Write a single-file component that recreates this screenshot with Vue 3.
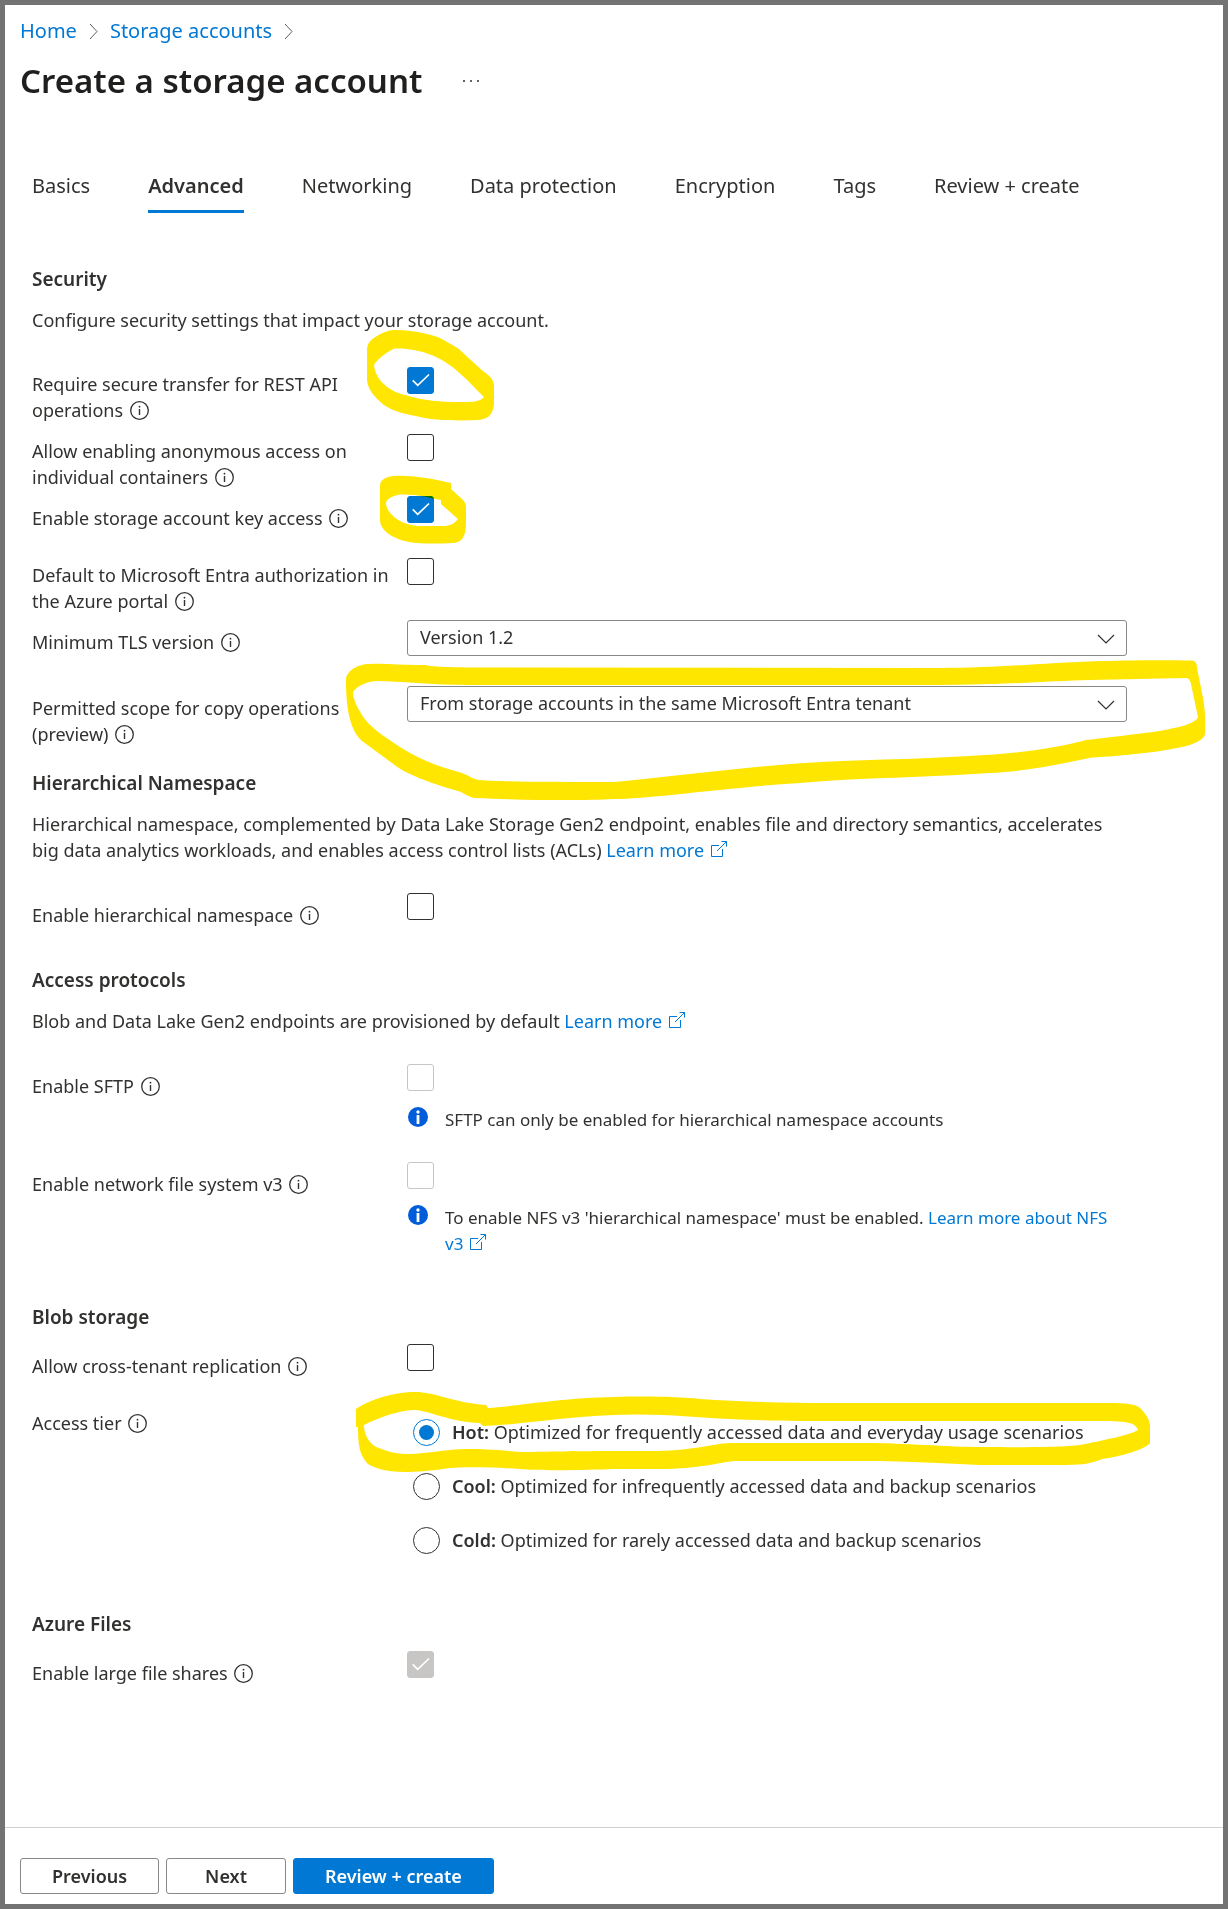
<template>
  <div class="page">
    <nav class="breadcrumb" aria-label="Breadcrumb">
      <template v-for="crumb in crumbs" :key="crumb">
        <a href="#">{{ crumb }}</a>
        <svg class="crumb-sep" viewBox="0 0 9 17" aria-hidden="true"><path d="M1 1l7 7.5L1 16" /></svg>
      </template>
    </nav>

    <header class="title-row">
      <h1>Create a storage account</h1>
      <button class="more" type="button" aria-label="More actions">
        <svg viewBox="0 0 18 4" aria-hidden="true">
          <circle cx="2" cy="2" r="1" />
          <circle cx="9" cy="2" r="1" />
          <circle cx="16" cy="2" r="1" />
        </svg>
      </button>
    </header>

    <div class="tabs" role="tablist">
      <button
        v-for="tab in tabs"
        :key="tab"
        :class="['tab', { active: tab === activeTab }]"
        type="button"
        role="tab"
        :aria-selected="tab === activeTab"
        @click="activeTab = tab"
      >
        {{ tab }}
      </button>
    </div>

    <main class="content">
      <section>
        <h2>Security</h2>
        <p>Configure security settings that impact your storage account.</p>

        <div class="fields">
          <div
            v-for="item in securityChecks"
            :key="item.id"
            :class="['field', { 'two-line': item.twoLine, roomy: item.roomy }]"
          >
            <label :for="item.id">{{ item.label }}&nbsp;<svg class="info"><use href="#icon-info" /></svg></label>
            <span class="check">
              <input :id="item.id" v-model="form[item.id]" type="checkbox" />
              <svg viewBox="0 0 27 27"><use href="#icon-check" /></svg>
            </span>
            <svg v-if="item.id === 'secureTransfer'" class="marker marker-transfer" viewBox="367 329 128 92" aria-hidden="true">
              <path d="M367 350C367 344 370 340 377 336C385 331 390 330 397 330C412 330 430 334 440 338C450 344 458 347 462 352C472 361 480 369 487 374C491 377 494 381 494 386L494 404C493 414 489 419 478 420C455 421 430 420 420 417C405 414 392 411 384 405C373 396 368 389 367 380ZM374 365C378 358 390 350 395 348.500C405 348 420 350 434 356C455 366 465 378 484 397C479 402 473 402 460 402C440 402 425 401 405 395C385 390 375 377 374 365Z" />
            </svg>
            <svg v-if="item.id === 'keyAccess'" class="marker marker-key" viewBox="380 475 87 70" aria-hidden="true">
              <path d="M380 486C380 480 385 477 393 476C410 475 430 478 451 483L451 489L462 499C465 502 466 504 466 508L466 524C466 536 462 543 452 543C435 544 415 544 405 541C392 538 380 530 380 520ZM386 503C387 498 393 496 400 494.500C418 494 430 498 441 500L441 504L458 519C454 524 450 526 443 526L418 526C400 525 386 513 386 503Z" />
            </svg>
          </div>

          <div class="field picker">
            <label for="tls">Minimum TLS version&nbsp;<svg class="info"><use href="#icon-info" /></svg></label>
            <span class="select">
              <select id="tls" v-model="form.tls">
                <option>Version 1.0</option>
                <option>Version 1.1</option>
                <option>Version 1.2</option>
              </select>
              <svg viewBox="0 0 18 10"><path d="M1 1l8 8 8-8" /></svg>
            </span>
          </div>

          <div class="field picker">
            <label for="scope">Permitted scope for copy operations (preview)&nbsp;<svg class="info"><use href="#icon-info" /></svg></label>
            <span class="select">
              <select id="scope" v-model="form.scope">
                <option>From any storage account</option>
                <option>From storage accounts in the same Microsoft Entra tenant</option>
              </select>
              <svg viewBox="0 0 18 10"><path d="M1 1l8 8 8-8" /></svg>
            </span>
            <svg class="marker marker-scope" viewBox="346 659 860 142" aria-hidden="true">
              <path d="M346 680C346 672 356 664 370 664C385 663 400 665 416 665L425 665C435 667 445 667 470 667.500L940 668C1000 668 1040 663 1100 661C1140 660 1170 660 1192 660.500C1196 661 1197 664 1197 668C1201 688 1205 705 1205 716L1205 733C1205 738 1200 741 1190 745C1165 752 1120 756 1092 757.500C1060 764 1030 771 990 773C920 778 870 777 800 783C720 788 650 799 614 799C580 801 520 800 475 798C468 797 464 793 458 791C430 783 405 774 392 763L362 741C351 731 346 712 346 680ZM353 692C358 685 368 681 378 681C400 681 430 685 470 685L940 685C1000 685 1050 681 1090 680L1185 678C1189 678 1190 680 1191 684L1198 717C1195 724 1180 727 1160 731C1130 735 1105 738 1086 740C1060 747 1030 752 985 755C930 759 880 759 820 762C740 767 680 776 614 782C560 782 500 782 480 780C474 780 470 776 462 773C440 767 420 760 400 747C385 737 368 726 362 715C355 704 353 697 353 692Z" />
            </svg>
          </div>
        </div>
      </section>

      <section class="namespace">
        <h2>Hierarchical Namespace</h2>
        <p>
          Hierarchical namespace, complemented by Data Lake Storage Gen2 endpoint, enables file and directory semantics,
          accelerates big data analytics workloads, and enables access control lists (ACLs)
          <a href="#">Learn more&nbsp;<svg class="external"><use href="#icon-external" /></svg></a>
        </p>
        <div class="fields">
          <div class="field">
            <label for="hns">Enable hierarchical namespace&nbsp;<svg class="info"><use href="#icon-info" /></svg></label>
            <span class="check">
              <input id="hns" v-model="form.hns" type="checkbox" />
              <svg viewBox="0 0 27 27"><use href="#icon-check" /></svg>
            </span>
          </div>
        </div>
      </section>

      <section class="protocols">
        <h2>Access protocols</h2>
        <p>
          Blob and Data Lake Gen2 endpoints are provisioned by default
          <a href="#">Learn more&nbsp;<svg class="external"><use href="#icon-external" /></svg></a>
        </p>
        <div class="fields">
          <div class="field">
            <label for="sftp">Enable SFTP&nbsp;<svg class="info"><use href="#icon-info" /></svg></label>
            <div>
              <span class="check">
                <input id="sftp" type="checkbox" disabled />
              </span>
              <div class="note">
                <svg class="note-icon"><use href="#icon-note" /></svg>
                <span>SFTP can only be enabled for hierarchical namespace accounts</span>
              </div>
            </div>
          </div>
          <div class="field">
            <label for="nfs">Enable network file system v3&nbsp;<svg class="info"><use href="#icon-info" /></svg></label>
            <div>
              <span class="check">
                <input id="nfs" type="checkbox" disabled />
              </span>
              <div class="note">
                <svg class="note-icon"><use href="#icon-note" /></svg>
                <span>
                  To enable NFS v3 'hierarchical namespace' must be enabled.
                  <a href="#">Learn more about NFS v3&nbsp;<svg class="external"><use href="#icon-external" /></svg></a>
                </span>
              </div>
            </div>
          </div>
        </div>
      </section>

      <section class="blob">
        <h2>Blob storage</h2>
        <div class="fields tight">
          <div class="field">
            <label for="replication">Allow cross-tenant replication&nbsp;<svg class="info"><use href="#icon-info" /></svg></label>
            <span class="check">
              <input id="replication" v-model="form.replication" type="checkbox" />
              <svg viewBox="0 0 27 27"><use href="#icon-check" /></svg>
            </span>
          </div>
          <div class="field">
            <span id="tier-label" class="label">Access tier&nbsp;<svg class="info"><use href="#icon-info" /></svg></span>
            <div class="tiers" role="radiogroup" aria-labelledby="tier-label">
              <label v-for="tier in tiers" :key="tier.name" class="tier">
                <input v-model="form.tier" type="radio" name="tier" :value="tier.name" />
                <span><strong>{{ tier.name }}:</strong> {{ tier.text }}</span>
              </label>
            </div>
            <svg class="marker marker-tier" viewBox="356 1391 795 82" aria-hidden="true">
              <path d="M356 1409C370 1399 395 1392 415 1392C435 1392 455 1403 486 1405L488 1408C510 1407 560 1398 614 1397C650 1396 680 1397 700 1399C740 1402 790 1403 830 1403L1110 1403C1130 1403 1138 1405 1141 1409C1147 1415 1150 1421 1150 1427L1150 1443C1146 1449 1120 1457 1102 1459C1090 1464 1082 1465 1060 1465L980 1465C950 1464 930 1462 880 1461L735 1461C720 1462 700 1469 660 1469L614 1469C590 1470 540 1471 520 1469C490 1467 465 1467 450 1468C430 1471 415 1472 405 1472C385 1472 375 1468 368 1464C361 1456 358 1450 358 1427L356 1427ZM364 1425C380 1417 400 1410 415 1410C430 1411 450 1422 480 1423L483 1426C520 1425 560 1417 614 1415C660 1413 690 1417 730 1419C770 1421 800 1421 830 1421L1100 1421C1130 1421 1135 1423 1138 1430C1130 1435 1100 1441 1080 1445C1060 1448 1000 1447 980 1447C950 1447 900 1443 870 1443L730 1443C710 1444 690 1452 640 1451C560 1451 540 1452 520 1452C480 1448 460 1449 450 1450C430 1452 420 1454 405 1454C390 1453 385 1450 376 1447C367 1441 364 1433 364 1425Z" />
            </svg>
          </div>
        </div>
      </section>

      <section class="files">
        <h2>Azure Files</h2>
        <div class="fields tight">
          <div class="field">
            <label for="shares">Enable large file shares&nbsp;<svg class="info"><use href="#icon-info" /></svg></label>
            <span class="check">
              <input id="shares" type="checkbox" checked disabled />
              <svg viewBox="0 0 27 27"><use href="#icon-check" /></svg>
            </span>
          </div>
        </div>
      </section>
    </main>

    <footer class="footer">
      <button class="btn" type="button">Previous</button>
      <button class="btn next" type="button">Next</button>
      <button class="btn primary" type="button">Review + create</button>
    </footer>

    <svg class="sprite" aria-hidden="true">
      <symbol id="icon-info" viewBox="0 0 19 19">
        <circle cx="9.5" cy="9.5" r="8.8" fill="none" stroke="#323130" stroke-width="1.3" />
        <path d="M9.500 8v6" stroke="#323130" stroke-width="1.4" />
        <circle cx="9.5" cy="5.700" r="0.9" fill="#323130" />
      </symbol>
      <symbol id="icon-check" viewBox="0 0 27 27">
        <path d="M5.700 13.300l5 5L22 7.500" fill="none" stroke="#fff" stroke-width="1.7" />
      </symbol>
      <symbol id="icon-external" viewBox="0 0 16 16">
        <path d="M8 4.500H0.500v11h11V8M10.500 0.500h5v5M15.500 0.500L6 10" fill="none" stroke="#0078d4" />
      </symbol>
      <symbol id="icon-note" viewBox="0 0 20 20">
        <circle cx="10" cy="10" r="10" fill="#015cda" />
        <circle cx="10" cy="5" r="1.7" fill="#fff" />
        <path d="M8.600 8h2.800v9H8.600z" fill="#fff" />
      </symbol>
    </svg>
  </div>
</template>

<script setup>
import { reactive, ref } from 'vue'

const crumbs = ['Home', 'Storage accounts']
const tabs = ['Basics', 'Advanced', 'Networking', 'Data protection', 'Encryption', 'Tags', 'Review + create']
const activeTab = ref('Advanced')

const securityChecks = [
  { id: 'secureTransfer', label: 'Require secure transfer for REST API operations', twoLine: true, roomy: true },
  { id: 'anonymousAccess', label: 'Allow enabling anonymous access on individual containers', twoLine: true },
  { id: 'keyAccess', label: 'Enable storage account key access' },
  { id: 'entraDefault', label: 'Default to Microsoft Entra authorization in the Azure portal', twoLine: true },
]

const tiers = [
  { name: 'Hot', text: 'Optimized for frequently accessed data and everyday usage scenarios' },
  { name: 'Cool', text: 'Optimized for infrequently accessed data and backup scenarios' },
  { name: 'Cold', text: 'Optimized for rarely accessed data and backup scenarios' },
]

const form = reactive({
  secureTransfer: true,
  anonymousAccess: false,
  keyAccess: true,
  entraDefault: false,
  tls: 'Version 1.2',
  scope: 'From storage accounts in the same Microsoft Entra tenant',
  hns: false,
  replication: false,
  tier: 'Hot',
})
</script>

<style>
body {
  margin: 0;
  background: #fff;
}
</style>

<style scoped>
.page {
  display: flex;
  flex-direction: column;
  box-sizing: border-box;
  min-height: 100vh;
  border: 5px solid #737373;
  color: #323130;
  font-family: 'Segoe UI', 'Noto Sans', sans-serif;
  font-size: 18px;
  line-height: 26px;
}

button,
select {
  color: inherit;
  font: inherit;
}

a {
  color: #0078d4;
  text-decoration: none;
}

.breadcrumb {
  display: flex;
  align-items: center;
  gap: 12px;
  padding: 13px 15px 0;
  font-size: 20px;
}

.crumb-sep {
  width: 9px;
  height: 17px;
  fill: none;
  stroke: #605e5c;
}

.title-row {
  display: flex;
  align-items: center;
  gap: 40px;
  padding: 15px 15px 0;
}

h1 {
  margin: 0;
  color: #201f1e;
  font-size: 33px;
  font-weight: 600;
  line-height: 44px;
}

.more {
  display: flex;
  padding: 0;
  border: 0;
  background: none;
}

.more svg {
  width: 18px;
  height: 4px;
  fill: #323130;
}

.tabs {
  display: flex;
  flex-wrap: wrap;
  gap: 58px;
  margin-top: 70px;
  padding: 0 27px;
}

.tab {
  padding: 0 0 11px;
  border: 0;
  border-bottom: 3px solid transparent;
  background: none;
  font-size: 20px;
  cursor: pointer;
}

.tab.active {
  border-bottom-color: #0078d4;
  font-weight: 600;
}

.content {
  flex: 1;
  padding: 53px 27px 40px;
}

h2 {
  margin: 0;
  font-size: 19px;
  font-weight: 600;
  line-height: 26px;
}

p {
  max-width: 1095px;
  margin: 15px 0 0;
}

.fields {
  margin-top: 30px;
}

section:first-child .fields {
  margin-top: 34px;
}

.fields.tight {
  margin-top: 14px;
}

.namespace {
  margin-top: 23px;
}

.protocols {
  margin-top: 18px;
}

.blob {
  margin-top: 47px;
}

.files {
  margin-top: 57px;
}

.field {
  position: relative;
  display: grid;
  grid-template-columns: 375px minmax(0, 720px);
  align-items: start;
  min-height: 56px;
}

.field + .field {
  margin-top: 6px;
}

.field.roomy + .field {
  margin-top: 11px;
}

.field.picker + .field {
  margin-top: 10px;
}

.protocols .field + .field {
  margin-top: 29px;
}

.blob .field + .field {
  margin-top: 1px;
}

.field > label,
.label {
  padding: 9px 8px 0 0;
}

.field.two-line > label {
  padding-top: 4px;
}

.info {
  width: 19px;
  height: 19px;
  margin-left: 2px;
  vertical-align: -3px;
}

.external {
  width: 16px;
  height: 16px;
  margin-left: 2px;
}

.check {
  position: relative;
  display: block;
  width: 27px;
  height: 27px;
}

.check input {
  display: block;
  width: 27px;
  height: 27px;
  margin: 0;
  border: 1px solid #323130;
  border-radius: 3px;
  background: #fff;
  appearance: none;
}

.check input:checked {
  border-color: #0078d4;
  background: #0078d4;
}

.check input:disabled {
  border-color: #c8c6c4;
}

.check input:checked:disabled {
  background: #c8c6c4;
}

.check svg {
  position: absolute;
  inset: 0;
  display: none;
  pointer-events: none;
}

.check input:checked + svg {
  display: block;
}

.select {
  position: relative;
  display: block;
}

.select select {
  display: block;
  box-sizing: border-box;
  width: 100%;
  height: 36px;
  padding: 0 40px 2px 12px;
  border: 1px solid #8a8886;
  border-radius: 3px;
  background: #fff;
  appearance: none;
}

.select svg {
  position: absolute;
  top: 14px;
  right: 12px;
  width: 18px;
  height: 10px;
  fill: none;
  stroke: #323130;
  stroke-width: 1.2;
  pointer-events: none;
}

.note {
  display: flex;
  gap: 17px;
  margin-top: 16px;
  font-size: 17px;
}

.note-icon {
  flex: none;
  width: 20px;
  height: 20px;
  margin-left: 1px;
}

.tiers {
  display: grid;
  gap: 27px;
  padding: 18px 0 0 6px;
}

.tier {
  display: flex;
  gap: 12px;
  height: 27px;
}

.tier input {
  display: grid;
  place-items: center;
  flex: none;
  width: 27px;
  height: 27px;
  margin: 0;
  border: 1px solid #323130;
  border-radius: 50%;
  background: #fff;
  appearance: none;
}

.tier input:checked {
  border-color: #0078d4;
}

.tier input:checked::after {
  width: 15px;
  height: 15px;
  border-radius: 50%;
  background: #0078d4;
  content: '';
}

.tier strong {
  font-weight: 600;
}

/* hand-drawn highlighter strokes over the fields to change */
.marker {
  position: absolute;
  fill: #ffe600;
  fill-rule: evenodd;
  mix-blend-mode: multiply;
  pointer-events: none;
}

.marker-transfer {
  top: -38px;
  left: 335px;
  width: 128px;
  height: 92px;
}

.marker-key {
  top: -21px;
  left: 348px;
  width: 87px;
  height: 70px;
}

.marker-scope {
  top: -27px;
  left: 314px;
  width: 860px;
  height: 142px;
}

.marker-tier {
  top: -10px;
  left: 324px;
  width: 795px;
  height: 82px;
}

.footer {
  display: flex;
  gap: 7px;
  padding: 30px 15px 10px;
  border-top: 1px solid #d2d0ce;
}

.btn {
  height: 36px;
  padding: 0 31px;
  border: 1px solid #8a8886;
  border-radius: 3px;
  background: #fff;
  font-weight: 600;
  cursor: pointer;
}

.btn.next {
  padding: 0 38px;
}

.btn.primary {
  border-color: #0078d4;
  background: #0078d4;
  color: #fff;
}

.sprite {
  position: absolute;
  width: 0;
  height: 0;
}

@media (max-width: 900px) {
  .tabs {
    gap: 24px;
  }

  .field {
    grid-template-columns: 1fr;
    gap: 8px;
  }

  .marker {
    display: none;
  }
}
</style>
